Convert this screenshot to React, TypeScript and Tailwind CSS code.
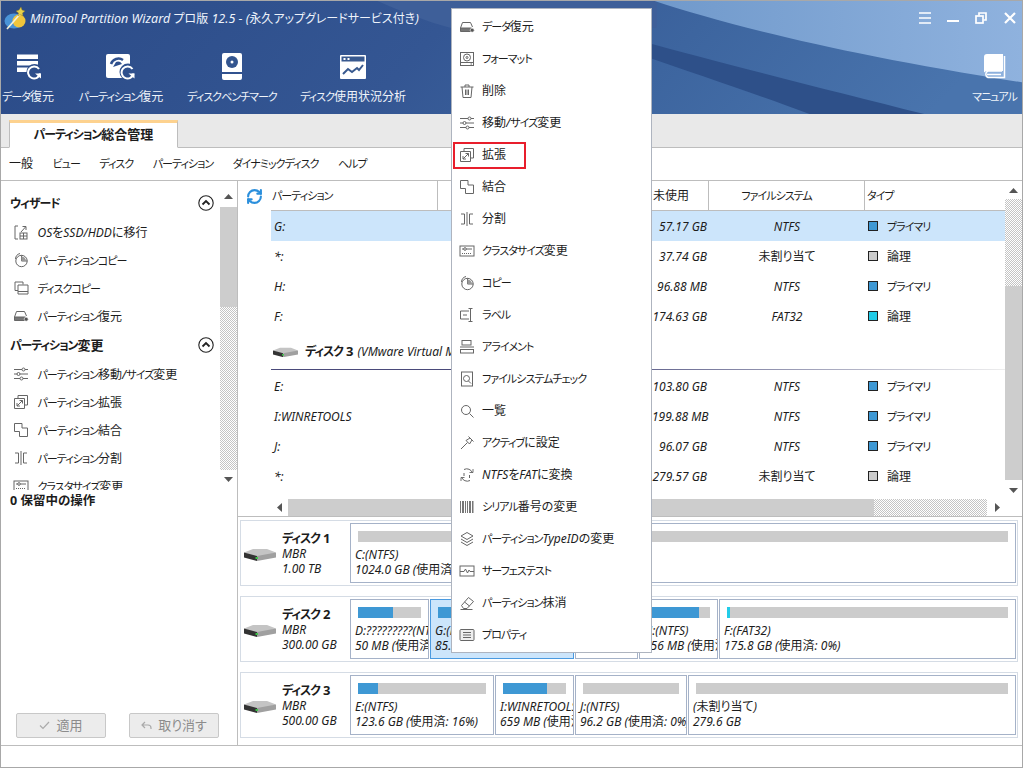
import React from "react";
import { RefreshCw } from "lucide-react";

const T = ({ s, plain, wide, latin = "" }: { s: string; plain?: boolean; wide?: boolean; latin?: string }) => (
  <>
    {s.split(/([\x20-\x7e]+|[\u30a0-\u30ff]+)/).map((p, i) =>
      /^[\x20-\x7e]+$/.test(p) ? (
        plain ? <span key={i}>{p}</span> : <i key={i} className={latin}>{p}</i>
      ) : /^[\u30a0-\u30ff]+$/.test(p) && !wide ? (
        <span key={i} className="text-[0.92em] tracking-[-0.09em]">{p}</span>
      ) : (
        <span key={i}>{p}</span>
      )
    )}
  </>
);

const Ic = ({ children, size = 16 }: { children: React.ReactNode; size?: number }) => (
  <svg viewBox="0 0 16 16" width={size} height={size} fill="none" stroke="#666" strokeWidth="1" className="shrink-0">
    {children}
  </svg>
);

const icons: Record<string, React.ReactNode> = {
  hdd: (<><path d="M1.5 9 3.5 3.5h8L13.5 8" /><path d="M1.5 9h11v3.5h-11z" fill="#777" /><circle cx="13.2" cy="11.2" r="2" fill="#555" stroke="#fff" strokeWidth=".6" /></>),
  format: (<><rect x="1.5" y="1.5" width="13" height="13" /><circle cx="8" cy="6.5" r="3.5" /><circle cx="8" cy="6.5" r="1" /><path d="M1.5 11.5h13M11.5 13h1.5" /></>),
  trash: <path d="M1.5 4h13M6 4V2h4v2M3 4l1 10.5h8L13 4M6.5 6.5v5.5M8 6.5v5.5M9.5 6.5v5.5" />,
  sliders: (<><path d="M1 3.5h14M1 8h14M1 12.5h14" /><circle cx="10.5" cy="3.5" r="1.5" fill="#fff" /><circle cx="5.5" cy="8" r="1.5" fill="#fff" /><circle cx="8.5" cy="12.5" r="1.5" fill="#fff" /></>),
  expand: <path d="M5 4.5V1.5h9.5V11H11.5M1.5 4.5h10v10h-10zM4 12l5.5-5.5M6.5 6.500h3v3M4 9v3h3" />,
  merge: <path d="M1.500 1.500h7.500v4.500h5.500v8.500h-8v-5h-5z" />,
  split: <path d="M2 3h3.500v10H2M14 3h-3.500v10H14M8 1v14" />,
  cluster: (<><rect x="1" y="3" width="14" height="10" /><path d="M3 6h10" /><circle cx="6" cy="6" r="1.300" fill="#fff" /><path d="M3 10.500h10" strokeDasharray="1 1" /></>),
  copy: (<><circle cx="8.500" cy="9" r="5.700" /><path d="M8.500 3.300V9h5.700" /><path d="M8.500 4.500V9h4.500A4.500 4.500 0 0 0 8.500 4.500z" fill="#999" stroke="none" /><path d="M2.500 7A6 6 0 0 1 7 1.500" /></>),
  label: <path d="M10 4H1.500v8H10M11.500 1.500v13M9.500 1.500h4M9.500 14.500h4M4 8h4" />,
  align: (<><rect x="3" y="1.500" width="9" height="4.500" /><path d="M1 8h14" /><rect x="1.500" y="10.500" width="13" height="3.500" /></>),
  check: (<><rect x="2.500" y="1" width="11" height="14" /><circle cx="7.500" cy="7.500" r="3" /><path d="M9.500 10 12 12.500" /></>),
  search: (<><circle cx="7" cy="7" r="4.500" /><path d="M10.500 10.500l4 4" /></>),
  pin: <path d="M9.500 1.500l5 5M11 3 7 5.500 10.500 9 13 5M8.500 7.500 2 14" />,
  convert: (<><path d="M13.500 6A6 6 0 0 0 5 2.500M2.500 10A6 6 0 0 0 11 13.500" /><path d="M10.500 5.500h3.500V2M5.500 10.500H2V14" strokeWidth=".9" /><path d="M5 6v3M10.500 8v3" /></>),
  barcode: (<g fill="#777" stroke="none"><rect x="1" y="2" width="1" height="12" /><rect x="3" y="2" width="2" height="12" /><rect x="6" y="2" width="1" height="12" /><rect x="8" y="2" width="1" height="12" /><rect x="10" y="2" width="2" height="12" /><rect x="13" y="2" width="1.500" height="12" /></g>),
  layers: <path d="M8 1.500 14 5 8 8.500 2 5zM2 8l6 3.500L14 8M2 11l6 3.500 6-3.500" />,
  surface: (<><rect x="1" y="3" width="14" height="10" /><path d="M1 8.500h4l1.500-2.500 2 4 1.500-3 1 1.500h4" /></>),
  eraser: <path d="M2.500 10.500 9.500 2.500l5 4-6.500 7H4.500zM5.500 7l5 4M1.500 14.500h12" />,
  props: (<><rect x="1" y="2.500" width="14" height="11" rx="1" fill="#eee" /><path d="M4 5.500h8M4 8h8M4 10.500h8" /></>),
  osmove: (<><path d="M5 2H2v13h3" /><rect x="7" y="9" width="7" height="6" /><path d="M10.500 9v6M7 12h7M8 8l4.500-5M9.500 2.500H13V6" /></>),
  diskcopy: (<><path d="M5 10.500H2V2h8v2.500" /><path d="M5 5h10v9H5zM5 11.500h10" /></>),
};

const menu: [string, string][] = [
  ["hdd", "データ復元"], ["format", "フォーマット"], ["trash", "削除"], ["sliders", "移動/サイズ変更"],
  ["expand", "拡張"], ["merge", "結合"], ["split", "分割"], ["cluster", "クラスタサイズ変更"],
  ["copy", "コピー"], ["label", "ラベル"], ["align", "アライメント"], ["check", "ファイルシステムチェック"],
  ["search", "一覧"], ["pin", "アクティブに設定"], ["convert", "NTFSをFATに変換"], ["barcode", "シリアル番号の変更"],
  ["layers", "パーティションTypeIDの変更"], ["surface", "サーフェステスト"], ["eraser", "パーティション抹消"], ["props", "プロパティ"],
];

const Hdd = ({ w = 32 }: { w?: number }) => (
  <svg viewBox="0 0 32 13" width={w} height={(w * 13) / 32} className="shrink-0">
    <path d="M0 4.500 9 1h14l9 3.500L23 8H9z" fill="#c4c4c4" />
    <path d="M0 4.500 13 8v5L0 9.500z" fill="#333" />
    <path d="M13 8l19-3.500v5L13 13z" fill="#a0a0a0" />
    <rect x="11.500" y="9" width="2.500" height="2" fill="#3fc24a" />
  </svg>
);

const Tool = ({ w, className, label, children }: { w: number; className: string; label: string; children: React.ReactNode }) => (
  <div className={`flex flex-col items-center shrink-0 ${className}`} style={{ width: w }}>
    <div className="h-[27px] flex items-center justify-center">{children}</div>
    <div className="mt-[9px] h-4 leading-4 whitespace-nowrap text-[#f0f4fa]"><T s={label} /></div>
  </div>
);

const checker = "w-full bg-[repeating-conic-gradient(#c4c4c4_0_25%,#fff_0_50%)] bg-[length:2px_2px] shrink-0";

const Scroll = ({ pad, gap, top, thumb, rest, end }: { pad: number; gap: number; top: number; thumb: number; rest: number; end: number }) => (
  <div className="w-[17px] h-full flex flex-col items-center shrink-0">
    <svg width="9" height="5" viewBox="0 0 9 5" className="shrink-0" style={{ marginTop: pad, marginBottom: gap }}><path d="M4.500 0 9 5H0z" fill="#555" /></svg>
    <div className={checker} style={{ height: top }} />
    <div className="w-full bg-[#cdcdcd] shrink-0" style={{ height: thumb }} />
    <div className={checker} style={{ height: rest }} />
    <svg width="9" height="5" viewBox="0 0 9 5" className="shrink-0" style={{ marginTop: end }}><path d="M4.500 5 9 0H0z" fill="#555" /></svg>
  </div>
);

const Chevron = () => (
  <svg viewBox="0 0 16 16" width="16" height="16" className="shrink-0">
    <circle cx="8" cy="8" r="7.200" fill="none" stroke="#222" strokeWidth="1.100" />
    <path d="M4.500 9.500 8 6l3.500 3.500" fill="none" stroke="#222" strokeWidth="1.800" />
  </svg>
);

const Side = ({ icon, text }: { icon: string; text: string }) => (
  <div className="h-7 flex items-center pl-[12px] gap-[8.5px] whitespace-nowrap">
    <Ic>{icons[icon]}</Ic>
    <span className="pt-px"><T s={text} /></span>
  </div>
);

const Head = ({ text, className = "" }: { text: string; className?: string }) => (
  <div className={`h-7 flex items-center justify-between pl-[9px] pr-[6px] font-bold text-[13px] ${className}`}>
    <span className="pt-px"><T s={text} plain /></span>
    <Chevron />
  </div>
);

const Row = ({ name, free, fs, color, type, sel }: { name: string; free: string; fs: string; color: string; type: string; sel?: boolean }) => (
  <div className={`h-[30px] flex items-center shrink-0 ${sel ? "bg-[#cce5fb]" : ""}`}>
    <div className="w-[381px] pl-[3px] pt-px shrink-0"><T s={name} /></div>
    <div className="w-[55px] text-right pt-px shrink-0 whitespace-nowrap"><T s={free} /></div>
    <div className="w-[158px] pl-[2px] pt-px text-center shrink-0"><T s={fs} /></div>
    <div className="flex items-center gap-[9px] pl-[3px]">
      <span className="w-[10px] h-[10px] border border-[#222] shrink-0" style={{ background: color }} />
      <span className="pt-px"><T s={type} /></span>
    </div>
  </div>
);

const Part = ({ w, pct, color = "#3e98d4", l1, l2, sel }: { w: number; pct: number; color?: string; l1: string; l2: string; sel?: boolean }) => (
  <div className={`shrink-0 h-[60px] border overflow-hidden whitespace-nowrap ${sel ? "bg-[#cce5fb] border-[#4a9ae0]" : "bg-white border-[#a5b2c8]"}`} style={{ width: w }}>
    <div className="h-[11px] mt-[7px] mx-[7px] bg-[#cccccc]">
      <div className="h-full" style={{ width: `${pct}%`, background: color }} />
    </div>
    <div className="h-[15px] leading-[15px] mt-[5px] pl-[4px]"><T s={l1} /></div>
    <div className="h-[15px] leading-[15px] pl-[4px]"><T s={l2} /></div>
  </div>
);

const DiskPanel = ({ n, size, children }: { n: string; size: string; children: React.ReactNode }) => (
  <div className="h-[66px] border border-[#d5dce5] flex items-center w-[778px] ml-[2px]">
    <div className="w-[109px] flex items-center shrink-0 pl-[3px] mt-[2px]">
      <Hdd />
      <div className="ml-[6px] -mt-[2px]">
        <div className="font-bold h-[15px] leading-[15px] text-[13px]"><T s={`ディスク ${n}`} plain /></div>
        <div className="h-[15px] leading-[15px]"><i>MBR</i></div>
        <div className="h-[15px] leading-[15px]"><i>{size}</i></div>
      </div>
    </div>
    <div className="flex gap-px">{children}</div>
  </div>
);

export default function App() {
  return (
    <div className="relative w-[1023px] h-[768px] overflow-hidden border border-[#a8a8a8] bg-white flex flex-col text-[12px] text-[#1c1c1c] font-['Noto_Sans','Noto_Sans_CJK_JP',sans-serif] [font-feature-settings:'palt']">
      {/* header */}
      <header className="relative h-[113px] shrink-0 overflow-hidden">
        <svg className="absolute inset-0" width="1021" height="113" viewBox="0 0 1023 114" preserveAspectRatio="none">
          <defs>
            <linearGradient id="base" x1="0" y1="0" x2="1" y2="0.1">
              <stop offset="0" stopColor="#2b4b88" />
              <stop offset="0.45" stopColor="#345693" />
              <stop offset="0.7" stopColor="#3d659f" />
              <stop offset="1" stopColor="#4974ad" />
            </linearGradient>
            <linearGradient id="light" x1="0" y1="0" x2="1" y2="0">
              <stop offset="0" stopColor="#7099cb" />
              <stop offset="1" stopColor="#8fb2de" />
            </linearGradient>
          </defs>
          <rect width="1023" height="114" fill="url(#base)" />
          <path d="M377 0C400 10 430 22 450 27L657 27V0Z" fill="#3e5f99" />
          <path d="M655 0C730 25 850 55 1023 82V0Z" fill="url(#light)" />
          <path d="M640 40C720 62 830 90 925 114H810C760 95 700 75 640 54Z" fill="#2e5089" />
        </svg>
        <div className="relative flex flex-col h-full">
          <div className="h-[34px] flex items-center pl-[3px] pr-[6px] shrink-0">
            <svg viewBox="0 0 22 24" width="22" height="24" className="shrink-0">
              <ellipse cx="10" cy="15" rx="9.500" ry="7.500" fill="#4a94d8" />
              <ellipse cx="15" cy="15" rx="6.500" ry="6.500" fill="#f0c53c" />
              <path d="M3 23 17 7" stroke="#f3f0d8" strokeWidth="1.600" />
              <path d="M17 1l1 3 3 1-2.500 2 .5 3-2.500-1.500L14 10l.5-3L12 5l3-1z" fill="#e8d04a" stroke="#8a7a20" strokeWidth=".4" />
            </svg>
            <div className="ml-[4px] pt-[2px] text-[#eef3fb] whitespace-nowrap"><T wide latin="text-[12.5px]" s="MiniTool Partition Wizard プロ版 12.5 - (永久アップグレードサービス付き)" /></div>
            <div className="ml-auto flex items-center gap-4">
              <svg width="12" height="12" viewBox="0 0 12 12" stroke="#fff" strokeWidth="1.600"><path d="M0 1h12M0 6h12M0 11h12" /></svg>
              <svg width="12" height="12" viewBox="0 0 12 12" stroke="#fff" strokeWidth="2"><path d="M0 9h12" /></svg>
              <svg width="12" height="12" viewBox="0 0 12 12" fill="none" stroke="#fff" strokeWidth="1.700"><rect x="1" y="4" width="7" height="7" /><path d="M4 3.500V1h7v7H8.500" /></svg>
              <svg className="ml-px" width="12" height="12" viewBox="0 0 12 12" stroke="#fff" strokeWidth="2.200"><path d="M1 1l10 10M11 1 1 11" /></svg>
            </div>
          </div>
          <div className="flex pt-[18px]">
            <Tool w={54} className="" label="データ復元">
              <svg width="27" height="27" viewBox="0 0 27 27">
                <g fill="#fff"><path d="M2 1.500h21V6H2z" /><path d="M2 8h21v4.500H2z" /><path d="M2 14.500h21V19H2z" /></g>
                <circle cx="19.500" cy="19" r="8" fill="#2d4d8a" />
                <path d="M24 16A6 6 0 1 0 25 20.500" fill="none" stroke="#fff" strokeWidth="2" /><path d="M20 20.500h6v5z" fill="#fff" />
              </svg>
            </Tool>
            <Tool w={84} className="ml-6" label="パーティション復元">
              <svg width="32" height="27" viewBox="0 0 32 27">
                <rect x="1" y="1" width="24" height="24" rx="2" fill="#fff" />
                <path d="M6 11A8 8 0 0 1 18 7" fill="none" stroke="#2f508d" strokeWidth="2.500" />
                <path d="M8 14l3-5a5 5 0 0 1 6 2z" fill="#2f508d" />
                <circle cx="23" cy="19" r="8.500" fill="#2f508d" />
                <path d="M27.500 16A6 6 0 1 0 28.500 20.500" fill="none" stroke="#fff" strokeWidth="2" /><path d="M23.500 20.500h6v5z" fill="#fff" />
              </svg>
            </Tool>
            <Tool w={90} className="ml-6" label="ディスクベンチマーク">
              <svg width="20" height="27" viewBox="0 0 20 27">
                <path d="M2 0h16a2 2 0 0 1 2 2v17H0V2a2 2 0 0 1 2-2z" fill="#fff" />
                <path d="M0 21h20v4a2 2 0 0 1-2 2H2a2 2 0 0 1-2-2z" fill="#fff" />
                <circle cx="10" cy="9" r="6" fill="#33558f" />
                <circle cx="10" cy="9" r="1.500" fill="#fff" />
              </svg>
            </Tool>
            <Tool w={106} className="ml-[23px]" label="ディスク使用状況分析">
              <svg width="26" height="24" viewBox="0 0 26 24">
                <rect width="26" height="24" rx="1" fill="#fff" />
                <rect x="1.500" y="1.500" width="23" height="5" fill="#38598f" />
                <rect x="3.500" y="3" width="2" height="2" fill="#fff" /><rect x="7.500" y="3" width="2" height="2" fill="#fff" />
                <path d="M3 19l5-5 4 3 5-4 2 2 4-5" fill="none" stroke="#38598f" strokeWidth="2" />
              </svg>
            </Tool>
            <div className="ml-auto mr-[5px]">
              <Tool w={45} className="" label="マニュアル">
                <svg width="23" height="25" viewBox="0 0 23 25">
                  <path d="M4 0h16v17H4a4 4 0 0 0-3 1.500V3a3 3 0 0 1 3-3z" fill="#fff" />
                  <path d="M21.500 2v21.500H5a3.500 3.500 0 0 1 0-6.500h14" fill="none" stroke="#fff" strokeWidth="1.500" />
                  <path d="M4 20.500h14" stroke="#fff" strokeWidth="1.500" />
                </svg>
              </Tool>
            </div>
          </div>
        </div>
      </header>

      {/* tabs */}
      <div className="h-[34px] shrink-0 bg-[#e9e9e9] border-b border-[#bdbdbd] flex items-end pl-2">
        <div className="w-[169px] h-[28px] -mb-px bg-white border-x border-b border-x-[#bdbdbd] border-b-white border-t-[3px] border-t-[#fdd28f] flex items-center justify-center font-bold text-[13px]"><T s="パーティション総合管理" plain /></div>
      </div>

      {/* menu bar */}
      <nav className="h-[33px] shrink-0 border-b border-[#bdbdbd] flex items-center gap-[19.5px] pl-2">
        {["一般", "ビュー", "ディスク", "パーティション", "ダイナミックディスク", "ヘルプ"].map((m) => <span key={m}><T s={m} /></span>)}
      </nav>

      {/* main */}
      <main className="h-[565px] shrink-0 flex border-b border-[#bdbdbd]">
        <aside className="w-[237px] shrink-0 border-r border-[#bdbdbd] flex flex-col">
          <div className="h-[309px] flex shrink-0 overflow-hidden">
            <div className="flex-1 pt-2 overflow-hidden">
              <Head text="ウィザード" />
              <div className="mt-px">
                <Side icon="osmove" text="OSをSSD/HDDに移行" />
                <Side icon="copy" text="パーティションコピー" />
                <Side icon="diskcopy" text="ディスクコピー" />
                <Side icon="hdd" text="パーティション復元" />
              </div>
              <Head text="パーティション変更" className="mt-px" />
              <div className="mt-px">
                <Side icon="sliders" text="パーティション移動/サイズ変更" />
                <Side icon="expand" text="パーティション拡張" />
                <Side icon="merge" text="パーティション結合" />
                <Side icon="split" text="パーティション分割" />
                <Side icon="cluster" text="クラスタサイズ変更" />
              </div>
            </div>
            <Scroll pad={13} gap={8} top={0} thumb={100} rest={163} end={7} />
          </div>
          <div className="pl-[9px] pt-[2px] h-[20px] flex items-center font-bold text-[12.5px] shrink-0">0 保留中の操作</div>
          <div className="mt-auto mb-[7px] flex justify-between pl-[15px] pr-[18px]">
            <button className="w-[90px] h-[25px] bg-[#ececec] border border-[#c8c8c8] rounded-[2px] text-[#8c8c8c] text-[13px] flex items-center justify-center gap-[6px]">
              <svg width="11" height="9" viewBox="0 0 11 9" fill="none" stroke="#aaa" strokeWidth="1.200"><path d="M1 4.500 4 7.500 10 1" /></svg>
              適用
            </button>
            <button className="w-[90px] h-[25px] bg-[#ececec] border border-[#c8c8c8] rounded-[2px] text-[#8c8c8c] text-[13px] flex items-center justify-center gap-[6px]">
              <svg width="11" height="9" viewBox="0 0 11 9" fill="none" stroke="#aaa" strokeWidth="1.200"><path d="M4 1 1 4l3 3M1 4h6a3 3 0 0 1 3 3v1" /></svg>
              取り消す
            </button>
          </div>
        </aside>

        <section className="flex-1 flex flex-col min-w-0">
          <div className="h-[336px] shrink-0 flex border-b border-[#bdbdbd]">
            <div className="w-[33px] shrink-0 flex justify-center pt-[7px]">
              <RefreshCw size={17} strokeWidth={3} color="#2b8fdc" />
            </div>
            <div className="w-[734px] shrink-0 flex flex-col">
              <div className="h-[30px] shrink-0 flex items-center border-b border-[#bdbdbd]">
                <div className="w-[167px] h-full shrink-0 border-r border-[#bdbdbd] flex items-center pl-[1px] pt-px"><T s="パーティション" /></div>
                <div className="w-[214px] shrink-0" />
                <div className="w-[57px] h-full shrink-0 border-r border-[#bdbdbd] flex items-center pl-px pt-px">未使用</div>
                <div className="w-[156px] h-full shrink-0 border-r border-[#bdbdbd] flex items-center justify-center pr-[20px] pt-px"><T s="ファイルシステム" /></div>
                <div className="pl-[2px] pt-px"><T s="タイプ" /></div>
              </div>
              <Row sel name="G:" free="57.17 GB" fs="NTFS" color="#3e98d4" type="プライマリ" />
              <Row name="*:" free="37.74 GB" fs="未割り当て" color="#cccccc" type="論理" />
              <Row name="H:" free="96.88 MB" fs="NTFS" color="#3e98d4" type="プライマリ" />
              <Row name="F:" free="174.63 GB" fs="FAT32" color="#22cce8" type="論理" />
              <div className="h-[38px] shrink-0 flex items-center gap-[7px] pl-[2px] pt-[4px] whitespace-nowrap overflow-hidden">
                <Hdd w={25} />
                <b className="text-[13px] -mr-[3px]"><T s="ディスク 3" plain /></b>
                <i>(VMware Virtual Mware Virtual S SAS Disk)</i>
              </div>
              <div className="h-px shrink-0 bg-gradient-to-r from-[#4a4a7a] from-40% to-[#eeeeee] mb-px" />
              <Row name="E:" free="103.80 GB" fs="NTFS" color="#3e98d4" type="プライマリ" />
              <Row name="I:WINRETOOLS" free="199.88 MB" fs="NTFS" color="#3e98d4" type="プライマリ" />
              <Row name="J:" free="96.07 GB" fs="NTFS" color="#3e98d4" type="プライマリ" />
              <Row name="*:" free="279.57 GB" fs="未割り当て" color="#cccccc" type="論理" />
              <div className="mt-auto h-[17px] shrink-0 flex items-center">
                <svg width="5" height="9" viewBox="0 0 5 9" className="ml-[6px] mr-[6px] shrink-0"><path d="M0 4.500 5 0v9z" fill="#555" /></svg>
                <div className="w-[586px] h-full bg-[#cdcdcd] shrink-0" />
                <div className="w-[113px] h-full bg-[repeating-conic-gradient(#c4c4c4_0_25%,#fff_0_50%)] bg-[length:2px_2px] shrink-0" />
                <svg width="5" height="9" viewBox="0 0 5 9" className="ml-[8px] shrink-0"><path d="M5 4.500 0 0v9z" fill="#555" /></svg>
              </div>
            </div>
            <Scroll pad={7} gap={6} top={87} thumb={194} rest={0} end={8} />
          </div>

          <div className="flex flex-col gap-[10px] pt-[3px]">
            <DiskPanel n="1" size="1.00 TB">
              <Part w={666} pct={0} l1="C:(NTFS)" l2="1024.0 GB (使用済: 0%)" />
            </DiskPanel>
            <DiskPanel n="2" size="300.00 GB">
              <Part w={79} pct={56} l1="D:?????????(NTFS)" l2="50 MB (使用済: 56%)" />
              <Part w={144} sel pct={60} l1="G:(NTFS)" l2="85.3 GB (使用済: 33%)" />
              <Part w={63} pct={0} l1="*:(未割り当て)" l2="37.7 GB" />
              <Part w={79} pct={82} l1="H:(NTFS)" l2="156 MB (使用済: 37%)" />
              <Part w={297} pct={1} color="#22cce8" l1="F:(FAT32)" l2="175.8 GB (使用済: 0%)" />
            </DiskPanel>
            <DiskPanel n="3" size="500.00 GB">
              <Part w={144} pct={16} l1="E:(NTFS)" l2="123.6 GB (使用済: 16%)" />
              <Part w={79} pct={70} l1="I:WINRETOOLS" l2="659 MB (使用済: 70%)" />
              <Part w={112} pct={0} l1="J:(NTFS)" l2="96.2 GB (使用済: 0%)" />
              <Part w={328} pct={0} l1="(未割り当て)" l2="279.6 GB" />
            </DiskPanel>
          </div>
        </section>
      </main>

      <footer className="flex-1" />

      {/* context menu */}
      <div className="absolute left-[450px] top-[7px] w-[201px] h-[645px] bg-white border border-[#aeb4bf] pt-[2px]">
        {menu.map(([ic, label]) => (
          <div key={label} className="h-8 flex items-center pl-[7px] gap-[7px] whitespace-nowrap">
            <Ic>{icons[ic]}</Ic>
            <span><T s={label} /></span>
          </div>
        ))}
        <div className="absolute left-[1px] top-[133px] w-[73px] h-[27px] border-2 border-[#e81e2c]" />
      </div>
    </div>
  );
}
